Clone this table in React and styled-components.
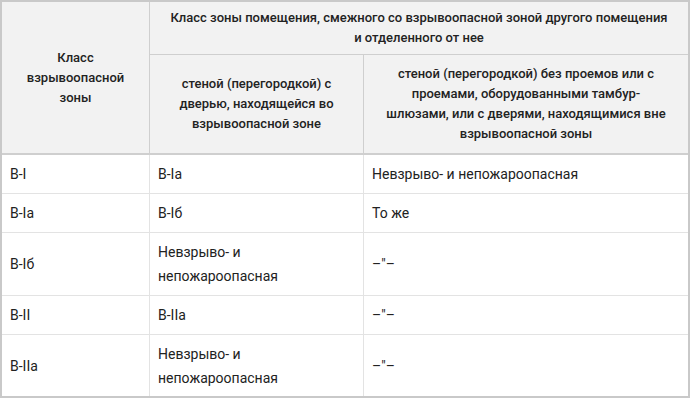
import React from 'react';
import styled, { createGlobalStyle } from 'styled-components';

const GlobalStyle = createGlobalStyle`
  html, body {
    margin: 0;
    padding: 0;
    background: #ffffff;
  }
  * {
    box-sizing: border-box;
  }
`;

const Grid = styled.div`
  display: grid;
  width: 690px;
  height: 398px;
  grid-template-columns: 148px 214px 324px;
  grid-template-rows: 53px 100px 39px 39px 63px 39px 61px;
  border: 2px solid #c9c9c9;
  font-family: Roboto, 'Liberation Sans', sans-serif;
  color: #222222;
`;

const HeadCell = styled.div`
  grid-column: ${props => props.col};
  grid-row: ${props => props.row};
  display: flex;
  align-items: center;
  justify-content: center;
  text-align: center;
  padding: 0 ${props => props.px || 10}px;
  background: #f2f2f2;
  font-size: 13px;
  font-weight: 500;
  line-height: 20px;
  border-right: ${props => (props.last ? 'none' : '1px solid #cfcfcf')};
  border-bottom: ${props => (props.bottom ? '2px solid #cfcfcf' : '1px solid #cfcfcf')};
`;

const Cell = styled.div`
  display: flex;
  align-items: center;
  padding: 0 8px;
  font-size: 14px;
  line-height: 24px;
  border-right: ${props => (props.last ? 'none' : '1px solid #e3e3e3')};
  border-bottom: ${props => (props.end ? 'none' : '1px solid #e3e3e3')};
`;

const rows = [
  ['В-I', 'В-Iа', 'Невзрыво- и непожароопасная'],
  ['В-Iа', 'В-Iб', 'То же'],
  ['В-Iб', 'Невзрыво- и непожароопасная', '–"–'],
  ['В-II', 'В-IIа', '–"–'],
  ['В-IIа', 'Невзрыво- и непожароопасная', '–"–'],
];

export default function App() {
  return (
    <>
      <GlobalStyle />
      <Grid>
        <HeadCell col="1" row="1 / span 2" px={12} bottom>
          Класс взрывоопасной зоны
        </HeadCell>
        <HeadCell col="2 / span 2" row="1" px={20} last>
          Класс зоны помещения, смежного со взрывоопасной зоной другого помещения и отделенного от нее
        </HeadCell>
        <HeadCell col="2" row="2" px={14} bottom>
          стеной (перегородкой) с дверью, находящейся во взрывоопасной зоне
        </HeadCell>
        <HeadCell col="3" row="2" px={19} bottom last>
          стеной (перегородкой) без проемов или с проемами, оборудованными тамбур-шлюзами, или с дверями, находящимися вне взрывоопасной зоны
        </HeadCell>
        {rows.map((row, i) =>
          row.map((text, j) => (
            <Cell key={`${i}-${j}`} last={j === 2} end={i === rows.length - 1}>
              {text}
            </Cell>
          ))
        )}
      </Grid>
    </>
  );
}
